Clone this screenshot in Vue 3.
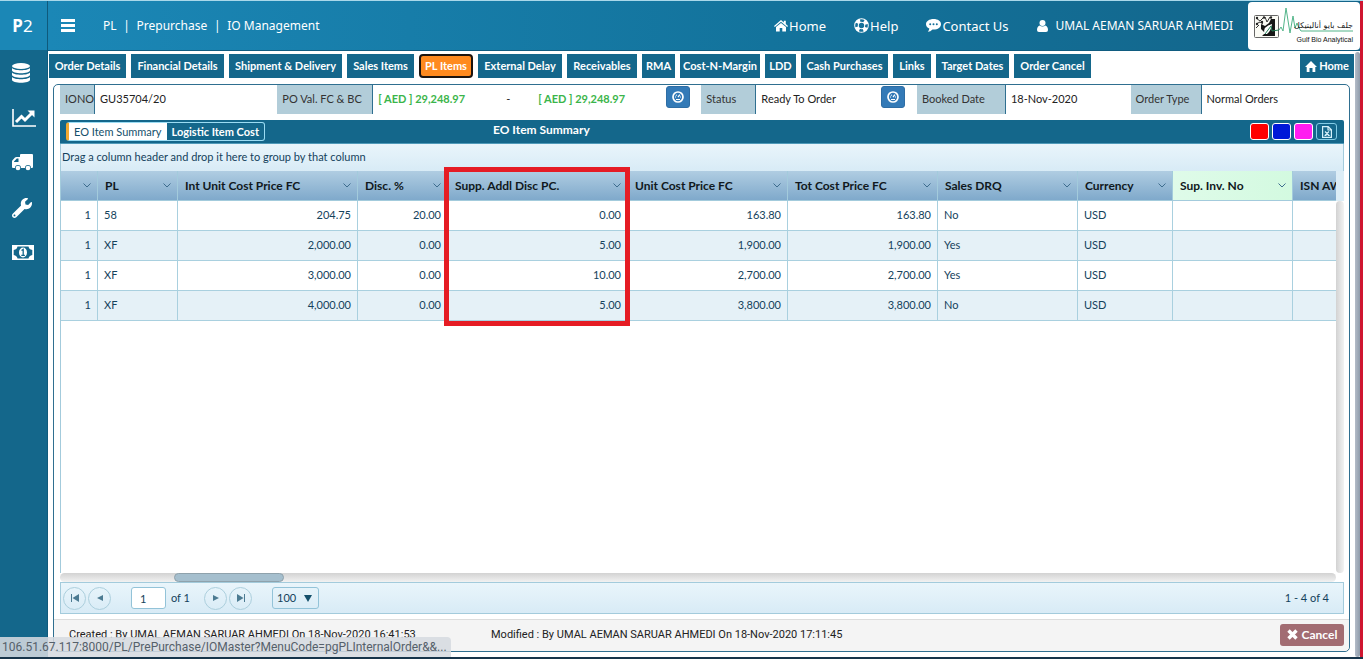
<script setup>
import { ref } from 'vue'

const tabs = ['Order Details', 'Financial Details', 'Shipment & Delivery', 'Sales Items', 'PL Items', 'External Delay', 'Receivables', 'RMA', 'Cost-N-Margin', 'LDD', 'Cash Purchases', 'Links', 'Target Dates', 'Order Cancel']
const activeTab = ref('PL Items')

const columns = [
  { key: 'qty', label: '', num: true },
  { key: 'pl', label: 'PL' },
  { key: 'unit', label: 'Int Unit Cost Price FC', num: true },
  { key: 'disc', label: 'Disc. %', num: true },
  { key: 'addl', label: 'Supp. Addl Disc PC.', num: true },
  { key: 'cost', label: 'Unit Cost Price FC', num: true },
  { key: 'total', label: 'Tot Cost Price FC', num: true },
  { key: 'drq', label: 'Sales DRQ' },
  { key: 'cur', label: 'Currency' },
  { key: 'inv', label: 'Sup. Inv. No', green: true },
  { key: 'isn', label: 'ISN AW', last: true },
]
const rows = [
  { qty: 1, pl: '58', unit: '204.75', disc: '20.00', addl: '0.00', cost: '163.80', total: '163.80', drq: 'No', cur: 'USD' },
  { qty: 1, pl: 'XF', unit: '2,000.00', disc: '0.00', addl: '5.00', cost: '1,900.00', total: '1,900.00', drq: 'Yes', cur: 'USD' },
  { qty: 1, pl: 'XF', unit: '3,000.00', disc: '0.00', addl: '10.00', cost: '2,700.00', total: '2,700.00', drq: 'Yes', cur: 'USD' },
  { qty: 1, pl: 'XF', unit: '4,000.00', disc: '0.00', addl: '5.00', cost: '3,800.00', total: '3,800.00', drq: 'No', cur: 'USD' },
]
const page = ref('1')
const size = ref('100')
</script>

<template>
  <div class="app">
    <aside class="side">
      <a href="#" class="brand"><b>P</b>2</a>
      <nav class="side-nav" aria-label="Modules">
        <a href="#" aria-label="Data">
          <svg width="18" height="20" viewBox="0 0 18 20" fill="#fff"><ellipse cx="9" cy="3" rx="9" ry="3" /><path d="M0 5c2 3 16 3 18 0v2.200c0 4-18 4-18 0zM0 9.500c2 3 16 3 18 0v2.200c0 4-18 4-18 0zM0 14c2 3 16 3 18 0v2.700c0 4-18 4-18 0z" /></svg>
        </a>
        <a href="#" aria-label="Reports">
          <svg width="24" height="18" viewBox="0 0 24 18" fill="none"><path d="M1 0v17h23" stroke="#fff" stroke-width="1.600" /><path d="M4 13l5.500-5.500 3.500 3.500 6.500-6.500" stroke="#fff" stroke-width="3" /><path d="M15.500 1.500h7v7z" fill="#fff" /></svg>
        </a>
        <a href="#" aria-label="Logistics">
          <svg width="21" height="17" viewBox="0 0 21 17" fill="#fff"><path d="M8 1q0-1 1-1h11q1 0 1 1v12q0 1-1 1h-1a3 3 0 0 0-6 0H9a3 3 0 0 0-6 0H1q-1 0-1-1V7.500q0-.6.5-1.200L3 3.500Q3.500 3 4.500 3H8zm-1.500 3.500H4.800L2 7.500V8h4.500z" fill-rule="evenodd" /><circle cx="6" cy="14" r="2.300" /><circle cx="16" cy="14" r="2.300" /></svg>
        </a>
        <a href="#" aria-label="Tools">
          <svg width="20" height="20" viewBox="0 0 512 512" fill="#fff"><path d="M507.730 109.100c-2.240-9.030-13.540-12.090-20.120-5.510l-74.360 74.360-67.880-11.310-11.310-67.880 74.360-74.360c6.620-6.620 3.430-17.900-5.660-20.160-47.380-11.740-99.550.91-136.580 37.930-39.640 39.640-50.550 97.100-34.050 147.200L18.740 402.760c-24.990 24.990-24.990 65.510 0 90.500 24.990 24.990 65.510 24.990 90.500 0l213.210-213.210c50.120 16.710 107.470 5.680 147.370-34.220 37.070-37.070 49.700-89.320 37.910-136.730zM64 472c-13.250 0-24-10.750-24-24 0-13.260 10.750-24 24-24s24 10.740 24 24c0 13.250-10.750 24-24 24z" /></svg>
        </a>
        <a href="#" aria-label="Finance">
          <svg width="22" height="15" viewBox="0 0 22 15"><path fill="#fff" fill-rule="evenodd" d="M0 0h22v15H0zM5.500 1.500Q5 4.500 1.700 5v5q3.300.5 3.800 3.500h11q.5-3 3.800-3.500V5q-3.300-.5-3.800-3.500z" /><ellipse cx="11" cy="7.500" rx="4" ry="5" fill="#fff" /><path d="M9.500 5.500l1.700-1V10M9.300 10.300h3.600" stroke="#14678b" stroke-width="1.300" fill="none" /></svg>
        </a>
      </nav>
    </aside>

    <div class="main">
      <header class="top">
        <button class="burger" aria-label="Menu"><svg width="14" height="13" viewBox="0 0 14 13" fill="#fff"><path d="M0 0h14v3H0zM0 5h14v3H0zM0 10h14v3H0z" /></svg></button>
        <div class="crumbs"><span>PL</span><i>|</i><span>Prepurchase</span><i>|</i><span>IO Management</span></div>
        <nav class="top-nav">
          <a href="#"><svg width="14" height="12" viewBox="0 0 14 12" fill="#fff"><path d="M7 0l2.800 2.400V.8h2v3.300L14 6l-.8.900L7 1.800.8 6.900 0 6zM7 3l5 4v4.500H8.300V8H5.700v3.500H2V7z" /></svg>Home</a>
          <a href="#"><svg width="15" height="15" viewBox="0 0 15 15" fill="none"><circle cx="7.500" cy="7.500" r="5" stroke="#fff" stroke-width="4.600" /><circle cx="7.500" cy="7.500" r="5" stroke="#14709a" stroke-width="2.600" stroke-dasharray="3.900 3.954" stroke-dashoffset="1.950" /></svg>Help</a>
          <a href="#"><svg width="15" height="13" viewBox="0 0 15 13"><path d="M7.500 0C12 0 15 2.200 15 5.200s-3 5.300-7.500 5.300l-1-.1Q4.500 12.500 1.800 12.700 3.400 11 3.300 9.500 0 8 0 5.200C0 2.200 3.500 0 7.500 0z" fill="#fff" /><g fill="#14709a"><circle cx="4.200" cy="5.300" r="1" /><circle cx="7.500" cy="5.300" r="1" /><circle cx="10.800" cy="5.300" r="1" /></g></svg>Contact Us</a>
          <a href="#" class="user"><svg width="11" height="12" viewBox="0 0 11 12" fill="#fff"><circle cx="5.500" cy="3" r="3" /><path d="M2.500 5.500q3 2 6 0Q11 6.500 11 10q0 2-2 2H2q-2 0-2-2 0-3.500 2.500-4.500z" /></svg>UMAL AEMAN SARUAR AHMEDI</a>
        </nav>
        <div class="logo">
          <svg width="112" height="48" viewBox="0 0 112 48" role="img" aria-label="Gulf Bio Analytical">
            <rect x="6.500" y="13.500" width="24" height="22" rx="1" fill="#fbfbf5" stroke="#666" />
            <path d="M13 22l4 2 4-3 2-4h4v17H14l3-3-4-4z" fill="#161616" />
            <path d="M16 32q-1-8 8-10-1 7-5 10z" fill="#fff" />
            <path d="M8 16l4 3 3-3M17 15l2 5M22 15l-3 5M8 22l4-2 3 2M8 26l3-3" stroke="#333" stroke-width="1" fill="none" />
            <g fill="#222"><circle cx="9" cy="16" r="1.200" /><circle cx="16" cy="15.500" r="1.200" /><circle cx="23" cy="15.500" r="1.200" /><circle cx="9" cy="22" r="1.200" /><circle cx="14" cy="20" r="1.200" /></g>
            <path d="M17 32l6-8 1 5 7-1" stroke="#238157" fill="none" />
            <path d="M31 28l2-3 2 4 3-23 4 25 3-17 2 12 2-5 2 5 2 3h52" stroke="#53b58a" stroke-width="1" fill="none" />
            <text x="105" y="26" text-anchor="end" direction="ltr" class="arabic">جلف بايو أناليتيكل</text>
            <text x="105" y="40" text-anchor="end" class="latin">Gulf Bio Analytical</text>
          </svg>
        </div>
      </header>

      <div class="content">
        <nav class="tabs">
          <button v-for="t in tabs" :key="t" :class="{ active: t === activeTab }" @click="activeTab = t">{{ t }}</button>
          <a href="#" class="home"><svg width="12" height="11" viewBox="0 0 12 11" fill="#fff"><path d="M6 0l6 6h-1.700v5H7.500V7h-3v4H1.700V6H0z" /></svg>Home</a>
        </nav>

        <section class="panel">
          <div class="info">
            <span class="lab">IONO</span><span class="val">GU35704/20</span>
            <span class="lab">PO Val. FC &amp; BC</span>
            <span class="val money"><b>[ AED ] 29,248.97</b><em>-</em><b>[ AED ] 29,248.97</b></span>
            <button class="gauge" aria-label="Value dashboard"><svg width="12" height="12" viewBox="0 0 12 12" fill="none" stroke="#fff"><circle cx="6" cy="6" r="5" stroke-width="1.700" /><path d="M3 6h1M8 6h1M4 3.800l.7.700M8 3.700L6 6M4 8.500h4" stroke-width="1.200" /></svg></button>
            <span class="lab">Status</span><span class="val">Ready To Order</span>
            <button class="gauge" aria-label="Status dashboard"><svg width="12" height="12" viewBox="0 0 12 12" fill="none" stroke="#fff"><circle cx="6" cy="6" r="5" stroke-width="1.700" /><path d="M3 6h1M8 6h1M4 3.800l.7.700M8 3.700L6 6M4 8.500h4" stroke-width="1.200" /></svg></button>
            <span class="lab">Booked Date</span><span class="val">18-Nov-2020</span>
            <span class="lab">Order Type</span><span class="val">Normal Orders</span>
          </div>

          <div class="grid">
            <div class="bar">
              <div class="switch"><button class="on">EO Item Summary</button><button>Logistic Item Cost</button></div>
              <h1>EO Item Summary</h1>
              <div class="tools">
                <button class="red" aria-label="Red"></button><button class="blue" aria-label="Blue"></button><button class="pink" aria-label="Pink"></button>
                <button class="xls" aria-label="Export to Excel"><svg width="10" height="12" viewBox="0 0 10 12" fill="none" stroke="#d5f1fb" stroke-width="1.200"><path d="M.6.6h5.600l3.200 3.200v7.600H.6zM6 .6V4h3.400M3 5.500l4 4M7 5.500l-4 4M2.500 9.500h2M5.800 9.500h2" /></svg></button>
              </div>
            </div>
            <div class="group">Drag a column header and drop it here to group by that column</div>
            <div class="table-area">
              <div class="table-clip">
                <table>
                  <colgroup><col v-for="c in columns" :key="c.key" :class="'c-' + c.key"></colgroup>
                  <thead>
                    <tr>
                      <th v-for="c in columns" :key="c.key" :class="{ green: c.green }">
                        <div><span>{{ c.label }}</span><svg v-if="!c.last" width="8" height="5" viewBox="0 0 8 5" fill="none" stroke="#3e6d8e"><path d="M.5.5L4 4 7.500.5" /></svg></div>
                      </th>
                    </tr>
                  </thead>
                  <tbody>
                    <tr v-for="(r, i) in rows" :key="i">
                      <td v-for="c in columns" :key="c.key" :class="{ num: c.num }">{{ r[c.key] }}</td>
                    </tr>
                  </tbody>
                </table>
                <div class="mark"></div>
              </div>
              <div class="vscroll"><i></i></div>
            </div>
            <div class="hscroll"><i></i></div>
            <div class="pager">
              <button class="round" aria-label="First page"><svg width="8" height="8" viewBox="0 0 8 8" fill="#4c7b92"><path d="M0 0h1v8H0zM8 0v8L1.500 4z" /></svg></button>
              <button class="round" aria-label="Previous page"><svg width="8" height="8" viewBox="0 0 8 8" fill="#4c7b92"><path d="M7 1v6L1 4z" /></svg></button>
              <input v-model="page" class="page" aria-label="Page">
              <span class="of">of 1</span>
              <button class="round" aria-label="Next page"><svg width="8" height="8" viewBox="0 0 8 8" fill="#4c7b92"><path d="M1 1v6l6-3z" /></svg></button>
              <button class="round" aria-label="Last page"><svg width="8" height="8" viewBox="0 0 8 8" fill="#4c7b92"><path d="M7 0h1v8H7zM0 0v8l6.500-4z" /></svg></button>
              <div class="size"><select v-model="size" aria-label="Rows per page"><option>100</option><option>50</option></select><svg width="8" height="7" viewBox="0 0 8 7" fill="#14506b"><path d="M0 0h8L4 7z" /></svg></div>
              <span class="count">1 - 4 of 4</span>
            </div>
          </div>

          <footer class="foot">
            <span>Created : By UMAL AEMAN SARUAR AHMEDI On 18-Nov-2020 16:41:53</span>
            <span>Modified : By UMAL AEMAN SARUAR AHMEDI On 18-Nov-2020 17:11:45</span>
            <button class="cancel"><svg width="11" height="11" viewBox="0 0 11 11" stroke="#fff" stroke-width="3.400"><path d="M1.500 1.500l8 8M9.500 1.500l-8 8" /></svg>Cancel</button>
          </footer>
        </section>
      </div>
    </div>
    <div class="page-scroll"></div>
    <div class="edge"></div>
    <div class="status">106.51.67.117:8000/PL/PrePurchase/IOMaster?MenuCode=pgPLInternalOrder&amp;&amp;...</div>
  </div>
</template>

<style>
body { margin: 0; }
</style>

<style scoped>
* { box-sizing: border-box; }
.app { position: relative; display: flex; min-height: 100vh; overflow: hidden; background: #fff; border-top: 1px solid #a9d8ea; border-bottom: 2px solid #16344a; font: 11px/16px Lato, "Open Sans", sans-serif; color: #222; }
button, input, select { font: inherit; margin: 0; padding: 0; border: 0; }
a { color: inherit; text-decoration: none; }
svg { display: block; flex: none; }
.side { flex: none; width: 48px; background: #14678b; border-right: 1px solid #0f5a7c; }
.brand { display: flex; align-items: center; justify-content: center; height: 49px; background: #1b87b6; color: #fff; font: 17px/24px "Noto Sans", sans-serif; padding-right: 2px; }
.side-nav a { display: flex; align-items: center; height: 45px; padding-left: 12px; }
.main { flex: 1; min-width: 0; display: flex; flex-direction: column; }
.top { display: flex; align-items: center; height: 50px; padding-right: 3px; background: linear-gradient(90deg, #1b87b6, #13739c 55%, #136489); border-bottom: 1px solid #105c80; color: #fff; font: 12px/20px "Noto Sans", sans-serif; }
.burger { background: none; margin-left: 13px; }
.crumbs { display: flex; margin-left: 28px; }
.crumbs i { font-style: normal; width: 20px; text-align: center; }
.top-nav { display: flex; gap: 28px; margin-left: auto; font-size: 13px; }
.top-nav a { display: flex; align-items: center; gap: 1px; }
.top-nav .user { gap: 8px; font-size: 12px; }
.logo { flex: none; width: 112px; height: 48px; background: #fff; border-radius: 4px; margin-left: 15px; }
.arabic { font: 8px "DejaVu Sans", sans-serif; fill: #222; }
.latin { font: 7px "Liberation Sans", sans-serif; fill: #111; }
.content { flex: 1; display: flex; flex-direction: column; padding: 3px 9px 5px 1px; }
.tabs { display: grid; grid-template-columns: 77px 93px 113px 67px 54px 84px 70px 33px 80px 31px 87px 38px 73px 77px 1fr; gap: 5px; }
.tabs button, .home { height: 24px; background: #14678b; color: #fff; font-weight: bold; font-size: 11px; white-space: nowrap; }
.tabs .active { background: #ff8a1f; border: 2px solid #1c1410; border-radius: 4px; }
.home { display: flex; align-items: center; justify-content: center; gap: 2px; width: 54px; justify-self: end; }
.panel { flex: 1; display: flex; flex-direction: column; margin: 6px 4px 0; border: 1px solid #2f6f90; border-radius: 5px; }
.info { display: grid; grid-template-columns: 35px 183fr 96px 292fr 35px 55px 125fr 36px 89px 125fr 71px 148fr; height: 29px; margin-left: 6px; }
.lab { background: #b2cdd9; border-right: 1px solid #2f6f90; padding: 6px 0 0 5px; color: #333; white-space: nowrap; }
.val { padding: 6px 0 0 5px; white-space: nowrap; }
.money { display: flex; }
.money b { width: 128px; color: #3bb54a; }
.money em { font-style: normal; width: 32px; }
.gauge { display: flex; align-items: center; justify-content: center; width: 24px; height: 22px; margin-top: 1px; border-radius: 3px; background: #337ab7; border: 1px solid #2e6da4; }
.grid { flex: 1; display: flex; flex-direction: column; margin: 6px 5px 5px 6px; }
.bar { display: grid; grid-template-columns: 433fr 425fr 426fr; align-items: center; height: 24px; background: #14678b; border-radius: 2px 2px 0 0; border-bottom: 1px solid #4f9ab9; }
.switch { display: flex; margin-left: 6px; width: 199px; height: 19px; border: 1px solid #9bdcf3; border-left: 3px solid #f0a830; border-radius: 3px; }
.switch button { flex: 1; background: none; color: #fff; font-weight: bold; white-space: nowrap; line-height: 15px; }
.switch .on { background: #fff; color: #14506b; font-weight: normal; }
.bar h1 { margin: 0; padding-bottom: 3px; font-size: 12px; line-height: 16px; color: #fff; }
.tools { display: flex; gap: 3px; justify-content: flex-end; padding-right: 7px; }
.tools button { width: 19px; height: 17px; border: 1px solid #fff; border-radius: 3px; }
.tools .red { background: #f00; }
.tools .blue { background: #0018d8; }
.tools .pink { background: #ff1cf0; }
.tools .xls { display: flex; align-items: center; justify-content: center; width: 21px; background: none; border-color: #83cce6; }
.group { height: 27px; padding: 5px 1px; background: linear-gradient(#e9f5fb, #d8ebf6); color: #14425c; border: solid #a3cbdc; border-width: 0 1px; }
.table-area { flex: 1; display: flex; border-left: 1px solid #a3cbdc; }
.table-clip { position: relative; flex: 1; min-width: 0; }
table { width: 100%; table-layout: fixed; border-collapse: separate; border-spacing: 0; color: #14425c; }
.c-qty { width: 37px; }
.c-pl { width: 80px; }
.c-unit, .c-addl { width: 180px; }
.c-disc { width: 90px; }
.c-cost { width: 160px; }
.c-total { width: 150px; }
.c-drq { width: 140px; }
.c-cur { width: 95px; }
.c-inv { width: 120px; }
th { height: 30px; padding: 0 6px 0 7px; background: linear-gradient(#b0cde2, #7fa9cb); border: solid #a3cbdc; border-width: 0 1px 1px 0; font-size: 12px; color: #101820; text-align: left; white-space: nowrap; overflow: hidden; }
th.green { background: linear-gradient(90deg, #dffbe9, #d3fae0); }
th div { display: flex; align-items: center; justify-content: space-between; }
th:last-child { padding-right: 0; }
td { height: 30px; padding: 0 6px 2px; border: solid #a9d0df; border-width: 0 1px 1px 0; white-space: nowrap; }
th:last-child, td:last-child { border-right: 0; }
tbody tr:nth-child(even) { background: #e5f1f7; }
.num { text-align: right; }
.mark { position: absolute; left: 383px; top: -4px; width: 186px; height: 159px; border: 5px solid #e51c24; }
.vscroll { flex: none; width: 8px; background: linear-gradient(#dcedf6 30px, #fff 30px); padding-top: 30px; display: flex; }
.vscroll i { flex: 1; background: linear-gradient(90deg, #d2d2d2, #f3f3f3); border-radius: 4px; }
.hscroll { height: 9px; background: linear-gradient(#d2d2d2, #f2f2f2); border-radius: 5px; margin-right: 8px; }
.hscroll i { display: block; height: 9px; width: 110px; margin-left: 114px; border: 1px solid #8fa2ac; border-radius: 5px; background: #a5bfce; }
.pager { display: flex; align-items: center; height: 32px; padding: 0 14px 0 2px; background: linear-gradient(#e9f5fb, #d8ebf6); border: 1px solid #a3cbdc; color: #14425c; }
.round { display: flex; align-items: center; justify-content: center; width: 23px; height: 23px; margin-right: 2px; border: 1px solid #accfdd; border-radius: 50%; background: none; }
.page { width: 35px; height: 22px; margin-left: 18px; padding-left: 8px; border: 1px solid #93c3d8; border-radius: 3px; background: #fff; color: #14425c; }
.of { width: 33px; margin-left: 5px; }
.size { display: flex; align-items: center; width: 47px; height: 22px; margin-left: 18px; padding-right: 6px; border: 1px solid #93c3d8; border-radius: 3px; }
.size select { flex: 1; appearance: none; background: none; padding-left: 4px; color: #14425c; }
.count { margin-left: auto; }
.foot { display: grid; grid-template-columns: 422fr 789fr auto; align-items: center; height: 32px; padding: 0 5px 2px 15px; background: #f4f4f4; border-top: 1px solid #ddd; border-radius: 0 0 5px 5px; font: 11px/16px Roboto, sans-serif; white-space: nowrap; }
.cancel { display: flex; align-items: center; justify-content: center; gap: 4px; width: 64px; height: 22px; border-radius: 3px; background: #a26c72; color: #fff; font: bold 12px/16px Lato, sans-serif; }
.page-scroll { position: absolute; right: 3px; top: 51px; bottom: 0; width: 5px; border-radius: 4px; background: linear-gradient(90deg, #b4bcc8, #8f9cab); }
.edge { position: absolute; right: 0; top: 0; bottom: 0; width: 3px; background: #cf1630; }
.status { position: absolute; left: 0; bottom: 0; width: 451px; height: 20px; padding: 0 2px; border-radius: 0 4px 0 0; background: rgba(214, 218, 224, 0.87); color: #55606a; font: 12px/20px Roboto, sans-serif; white-space: nowrap; overflow: hidden; }
</style>
